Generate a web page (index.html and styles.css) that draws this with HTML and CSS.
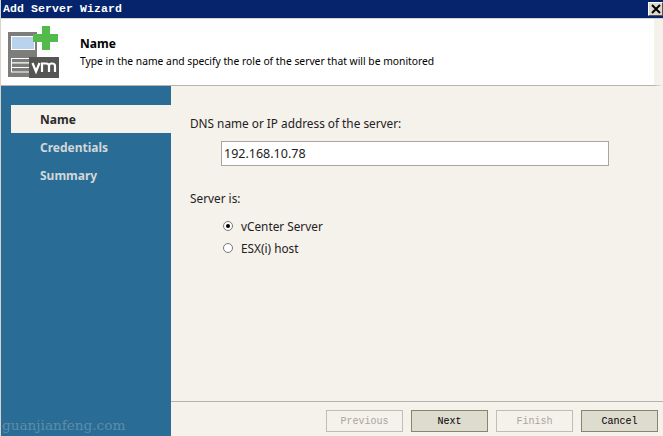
FILE: index.html
```html
<!DOCTYPE html>
<html lang="en">

<head>
  <meta charset="UTF-8">
  <title>Add Server Wizard</title>
  <link rel="stylesheet" href="styles.css">
</head>

<body>
  <div class="titlebar">
    <strong class="title">Add Server Wizard</strong>
    <div class="close">
      <svg width="12" height="10" viewBox="0 0 12 10">
        <path d="M2 1 L10 9 M10 1 L2 9" stroke="#000" stroke-width="2" fill="none" />
      </svg>
    </div>
  </div>

  <div class="header">
    <svg class="logo" width="52" height="52" viewBox="0 0 52 52">
      <rect x="0" y="6" width="29" height="45" fill="#7d7e7c" />
      <rect x="3.500" y="10.500" width="23" height="13" fill="#b9d3ec" stroke="#fff" stroke-width="1" />
      <rect x="3.500" y="32.500" width="18" height="4.500" fill="#7d7e7c" stroke="#fff" stroke-width="1" />
      <rect x="3.500" y="37" width="18" height="4.500" fill="#7d7e7c" stroke="#fff" stroke-width="1" />
      <rect x="3.500" y="41.500" width="18" height="4.500" fill="#7d7e7c" stroke="#fff" stroke-width="1" />
      <rect x="21" y="31" width="30" height="21" fill="#555653" />
      <path d="M24.500 37 L28 45.500 L31.500 37 M34 46 V37.500 H38 Q41 37.500 41 40 V46 M41 40 Q41 37.500 44 37.500 Q47 37.500 47 40 V46" stroke="#fff" stroke-width="2.200" fill="none" />
      <path d="M34 0 H42 V8 H50 V16 H42 V24 H34 V16 H25 V8 H34 Z" fill="#52bb4b" />
    </svg>
    <div class="header-text">
      <strong class="header-title">Name</strong>
      <p class="header-desc">Type in the name and specify the role of the server that will be monitored</p>
    </div>
  </div>

  <div class="main">
    <div class="sidebar">
      <div class="step active">Name</div>
      <div class="step">Credentials</div>
      <div class="step">Summary</div>
      <div class="watermark">guanjianfeng.com</div>
    </div>

    <div class="content">
      <div class="form">
        <label class="label">DNS name or IP address of the server:</label>
        <input class="address" type="text" value="192.168.10.78">
        <div class="label role">Server is:</div>
        <label class="radio"><span class="dot checked"></span>vCenter Server</label>
        <label class="radio"><span class="dot"></span>ESX(i) host</label>
      </div>
      <div class="footer">
        <button class="btn" disabled>Previous</button>
        <button class="btn">Next</button>
        <button class="btn" disabled>Finish</button>
        <button class="btn">Cancel</button>
      </div>
    </div>
  </div>
</body>

</html>
```

FILE: styles.css
```css
* {
  box-sizing: border-box;
}

html,
body {
  margin: 0;
  height: 100%;
  overflow: hidden;
}

body {
  width: 663px;
  height: 436px;
  display: flex;
  flex-direction: column;
  font-family: "Noto Sans", "DejaVu Sans", sans-serif;
  font-size: 11.800px;
  color: #222;
  background-color: #f5f1eb;
  border-left: 1px solid #d8d4cc;
}

.titlebar {
  height: 19px;
  flex: none;
  display: flex;
  align-items: flex-start;
  justify-content: space-between;
  background-color: #06246b;
  border-bottom: 1px solid #d8d4cc;
  margin-left: -1px;
}

.title {
  margin: 2px 0 0 3px;
  font-family: "Liberation Mono", monospace;
  font-size: 11.500px;
  line-height: 14px;
  letter-spacing: 0.100px;
  color: #fff;
}

.close {
  width: 15px;
  height: 14px;
  margin-top: 2px;
  display: flex;
  align-items: center;
  justify-content: center;
  background-color: #dedad2;
  border: 1px solid;
  border-color: #fff #555 #555 #fff;
}

.header {
  height: 67px;
  flex: none;
  display: flex;
  background-color: #fff;
  border-right: 9px solid #f5f1eb;
  border-bottom: 1px solid #b8b4ac;
  padding: 7px 0 0 7px;
}

.logo {
  flex: none;
}

.header-text {
  margin-left: 20px;
  padding-top: 10px;
}

.header-title {
  display: block;
  font-size: 12px;
  line-height: 16px;
  color: #000;
}

.header-desc {
  margin: 2px 0 0;
  font-size: 10.300px;
  line-height: 15px;
  color: #000;
}

.main {
  flex: 1;
  display: flex;
  min-height: 0;
}

.sidebar {
  width: 170px;
  flex: none;
  position: relative;
  padding: 19px 0 0 10px;
  background-color: #296d96;
}

.step {
  height: 28px;
  padding-left: 29px;
  font-weight: 700;
  font-size: 12px;
  line-height: 30px;
  color: #d3d7d8;
}

.step.active {
  color: #2b2b2b;
  background-color: #f5f1eb;
}

.watermark {
  position: absolute;
  left: 1px;
  bottom: 3px;
  font-family: "DejaVu Serif", serif;
  font-size: 13.600px;
  line-height: 16px;
  color: #5f8ca8;
}

.content {
  flex: 1;
  display: flex;
  flex-direction: column;
}

.form {
  flex: 1;
  padding: 29px 0 0 19px;
}

.label {
  display: block;
  line-height: 16px;
}

.address {
  display: block;
  width: 388px;
  height: 25px;
  margin: 10px 0 0 31px;
  padding: 0 2px;
  font-family: inherit;
  font-size: 12.500px;
  color: #222;
  background-color: #fff;
  border: 1px solid #a9a69f;
}

.role {
  margin-top: 24px;
}

.radio {
  display: flex;
  align-items: center;
  height: 22px;
  margin-left: 33px;
}

.role + .radio {
  margin-top: 9px;
}

.dot {
  width: 10px;
  height: 10px;
  margin-right: 8px;
  display: flex;
  align-items: center;
  justify-content: center;
  background-color: #fff;
  border: 1px solid #777;
  border-radius: 50%;
}

.dot.checked::after {
  content: "";
  width: 4px;
  height: 4px;
  border-radius: 50%;
  background-color: #000;
}

.footer {
  height: 35px;
  flex: none;
  display: flex;
  gap: 8px;
  justify-content: flex-end;
  padding: 8px 5px 0 0;
  border-top: 1px solid #b8b4ac;
}

.btn {
  width: 77px;
  height: 22px;
  padding: 0;
  font-family: "Liberation Mono", monospace;
  font-size: 10px;
  color: #000;
  background-color: #dedbcf;
  border: 1px solid #87846f;
}

.btn:disabled {
  color: #a9a69f;
  background-color: #f5f1eb;
  border-color: #c0bdb5;
}
```
